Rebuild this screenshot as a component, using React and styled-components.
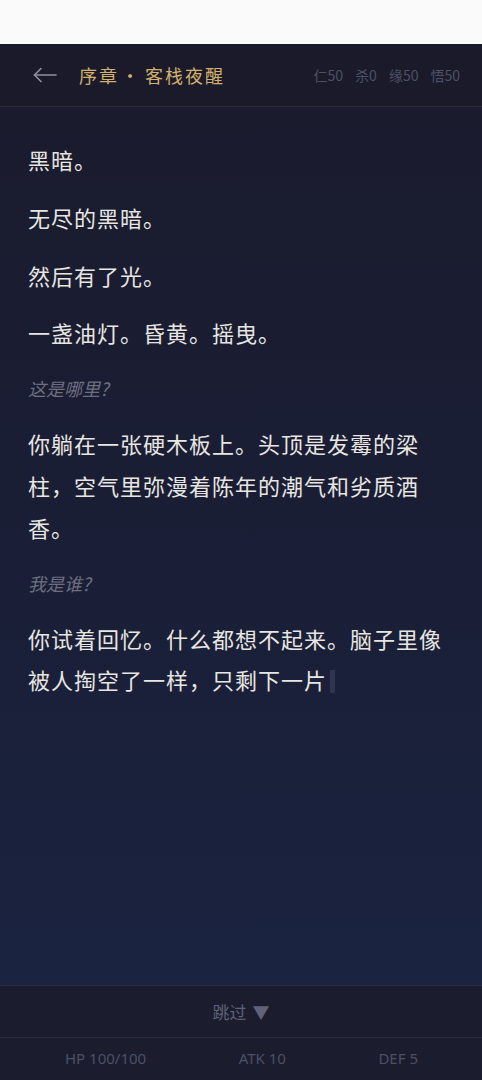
import React from 'react';
import styled, { createGlobalStyle } from 'styled-components';

const GlobalStyle = createGlobalStyle`
  * { box-sizing: border-box; }
  body {
    margin: 0;
    background: #fafafa;
    font-family: "Noto Sans CJK SC", "Noto Sans", sans-serif;
  }
`;

const Page = styled.div`
  width: 482px;
  height: 1080px;
  display: flex;
  flex-direction: column;
`;

const StatusBar = styled.div`
  height: 44px;
  flex-shrink: 0;
  background: #fafafa;
`;

const Header = styled.header`
  height: 63px;
  flex-shrink: 0;
  display: flex;
  align-items: center;
  padding: 0 22px 0 33px;
  background: #1a1a2b;
  border-bottom: 1px solid #262838;
`;

const BackButton = styled.button`
  background: none;
  border: none;
  padding: 0;
  width: 24px;
  height: 20px;
  display: flex;
  align-items: center;
  color: #8d90a3;
  cursor: pointer;
  margin-right: 22px;
`;

const Title = styled.h1`
  margin: 0;
  font-size: 18px;
  font-weight: 400;
  color: #d3b06c;
  letter-spacing: 2px;
  white-space: nowrap;
`;

const Dot = styled.span`
  margin: 0 4px 0 2px;
`;

const Virtues = styled.div`
  margin-left: auto;
  display: flex;
  gap: 12px;
  font-size: 14px;
  color: #4d5166;
  white-space: nowrap;
`;

const Story = styled.main`
  flex: 1;
  padding: 32px 28px;
  background: linear-gradient(180deg, #1a1b2d 0%, #1a1e35 45%, #1a2340 100%);
`;

const Para = styled.p`
  margin: 0 0 16px;
  font-size: 22px;
  line-height: 1.9;
  letter-spacing: 1px;
  color: #e8e6e1;
`;

const Thought = styled.p`
  margin: 0 0 16px;
  font-size: 18px;
  line-height: 37px;
  font-style: italic;
  color: #6d6f80;
`;

const Caret = styled.span`
  display: inline-block;
  width: 5px;
  height: 23px;
  margin-left: 3px;
  vertical-align: -4px;
  background: #30344e;
`;

const SkipBar = styled.div`
  height: 52px;
  flex-shrink: 0;
  display: flex;
  align-items: center;
  justify-content: center;
  background: #1b1c2d;
  border-top: 1px solid #2b2e42;
`;

const SkipButton = styled.button`
  background: none;
  border: none;
  font-family: inherit;
  font-size: 17px;
  color: #5f6278;
  display: flex;
  align-items: center;
  gap: 6px;
  cursor: pointer;
  padding: 0;
`;

const StatsBar = styled.footer`
  height: 43px;
  flex-shrink: 0;
  display: flex;
  align-items: center;
  justify-content: space-between;
  padding: 0 64px 2px 65px;
  background: #1b1c2d;
  border-top: 1px solid #2a2c3e;
`;

const Stat = styled.span`
  font-family: "Noto Sans", sans-serif;
  font-size: 15px;
  color: #4c5066;
`;

const ArrowLeft = () => (
  <svg width="24" height="16" viewBox="0 0 24 16" fill="none" stroke="currentColor" strokeWidth="1.6" strokeLinecap="round">
    <path d="M1.5 8 H23" />
    <path d="M8 1.5 L1.5 8 L8 14.5" />
  </svg>
);

export default function App() {
  return (
    <>
      <GlobalStyle />
      <Page>
        <StatusBar />
        <Header>
          <BackButton aria-label="返回">
            <ArrowLeft />
          </BackButton>
          <Title>
            序章<Dot>·</Dot>客栈夜醒
          </Title>
          <Virtues>
            <span>仁50</span>
            <span>杀0</span>
            <span>缘50</span>
            <span>悟50</span>
          </Virtues>
        </Header>
        <Story>
          <Para>黑暗。</Para>
          <Para>无尽的黑暗。</Para>
          <Para>然后有了光。</Para>
          <Para>一盏油灯。昏黄。摇曳。</Para>
          <Thought>这是哪里?</Thought>
          <Para>你躺在一张硬木板上。头顶是发霉的梁柱，空气里弥漫着陈年的潮气和劣质酒香。</Para>
          <Thought>我是谁?</Thought>
          <Para>
            你试着回忆。什么都想不起来。脑子里像被人掏空了一样，只剩下一片
            <Caret />
          </Para>
        </Story>
        <SkipBar>
          <SkipButton>
            跳过 <span>▼</span>
          </SkipButton>
        </SkipBar>
        <StatsBar>
          <Stat>HP 100/100</Stat>
          <Stat>ATK 10</Stat>
          <Stat>DEF 5</Stat>
        </StatsBar>
      </Page>
    </>
  );
}
